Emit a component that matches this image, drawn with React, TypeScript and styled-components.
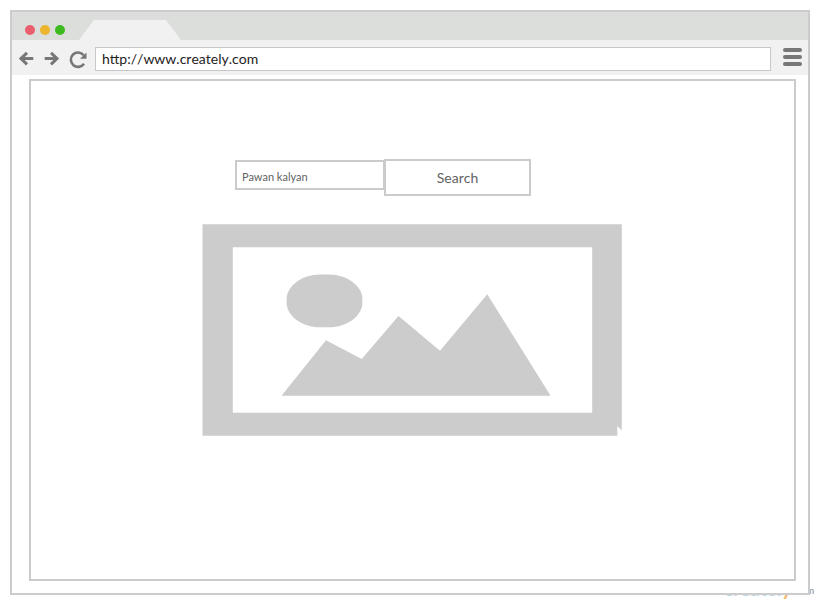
import React from "react";
import styled, { createGlobalStyle } from "styled-components";

const Global = createGlobalStyle`
  *, *::before, *::after { box-sizing: border-box; }
  html, body { margin: 0; background: #fff; overflow: hidden; }
  body { font-family: Lato, "Liberation Sans", sans-serif; }
`;

const Stage = styled.div`
  position: relative;
  width: 820px;
  height: 605px;
  padding: 10px;
  overflow: hidden;
`;

const Browser = styled.main`
  position: relative;
  width: 800px;
  height: 585px;
  border: 2px solid #cbcccb;
  background: #fff;
`;

const TabStrip = styled.header`
  display: flex;
  align-items: flex-end;
  height: 28px;
  padding-left: 13px;
  background: #dcdedb;
`;

const Lights = styled.div`
  display: flex;
  gap: 5px;
  height: 15.5px;
  width: 54px;
`;

const Light = styled.span<{ $color: string }>`
  width: 10px;
  height: 10px;
  border-radius: 50%;
  background: ${(p) => p.$color};
`;

const Tab = styled.div`
  width: 103px;
  height: 20px;
  background: #f1f1f1;
  clip-path: polygon(15px 0, 87px 0, 102px 100%, 0 100%);
`;

const Toolbar = styled.nav`
  display: flex;
  align-items: center;
  height: 35px;
  padding: 0 6px 0 7px;
  background: #f1f1f1;
`;

const NavIcons = styled.svg`
  display: block;
  width: 76px;
  height: 35px;
  flex: none;
`;

const Address = styled.div`
  width: 676px;
  height: 24px;
  margin-top: 2px;
  padding-left: 6px;
  border: 1px solid #c8c8c8;
  background: #fff;
  color: #222;
  font-size: 14px;
  line-height: 22px;
  font-kerning: none;
`;

const Menu = styled.div`
  display: flex;
  flex-direction: column;
  gap: 3px;
  margin: 0 0 2px 12px;
`;

const MenuBar = styled.span`
  width: 19px;
  height: 4px;
  border-radius: 2px;
  background: #777;
`;

const Page = styled.section`
  width: 767px;
  height: 502px;
  margin: 4px 0 0 17px;
  padding-top: 78px;
  border: 2px solid #cbcbcb;
`;

const SearchRow = styled.div`
  display: flex;
  align-items: flex-start;
  margin-left: 204px;
  height: 37px;
`;

const Field = styled.div`
  width: 150px;
  height: 30px;
  margin: 1px -1px 0 0;
  padding-left: 5px;
  border: 2px solid #cbcbcb;
  color: #626262;
  font-size: 11px;
  line-height: 29px;
`;

const Button = styled.div`
  width: 147px;
  height: 37px;
  border: 2px solid #cbcbcb;
  background: #fff;
  color: #626262;
  font-size: 14px;
  line-height: 33px;
  text-align: center;
  font-kerning: none;
`;

const Placeholder = styled.svg`
  display: block;
  width: 420px;
  height: 212px;
  margin: 28px 0 0 171px;
`;

const Watermark = styled.div`
  position: absolute;
  left: 724px;
  top: 577px;
  font-size: 19px;
  line-height: 24px;
  font-weight: 700;
  color: #b9d9ee;
`;

const Accent = styled.span`
  color: #f8b568;
`;

const Suffix = styled.span`
  position: absolute;
  left: 806px;
  top: 584px;
  width: 8px;
  overflow: hidden;
  clip-path: inset(0 0 0 4px);
  color: #888;
  font-size: 10px;
  line-height: 12px;
`;

export default function App() {
  return (
    <Stage>
      <Global />
      <Watermark>createl<Accent>y</Accent></Watermark>
      <Browser>
        <TabStrip>
          <Lights>
            <Light $color="#ea5f6d" />
            <Light $color="#ecb52d" />
            <Light $color="#3cba1f" />
          </Lights>
          <Tab />
        </TabStrip>
        <Toolbar>
          <NavIcons viewBox="19 40 76 35" fill="none" stroke="#777" strokeWidth="3">
            <path d="M33.3 58.5H21M27 52.8L21 58.5L27 64.3" />
            <path d="M44.7 58.5H57M51 52.8L57 58.5L51 64.3" />
            <path d="M83.7 55.2A7.2 7.2 0 1 0 84 63.8" strokeWidth="2.6" />
            <path d="M86.5 52.5V58.8H80Z" fill="#777" stroke="none" />
          </NavIcons>
          <Address>http://www.creately.com</Address>
          <Menu><MenuBar /><MenuBar /><MenuBar /></Menu>
        </Toolbar>
        <Page>
          <SearchRow>
            <Field>Pawan kalyan</Field>
            <Button>Search</Button>
          </SearchRow>
          <Placeholder viewBox="202 224 420 212" fill="#ccc">
            <path fillRule="evenodd" d="M202.5 224.3H621.8V430.5L617.3 426V435.7H202.5ZM232.8 247.3V412.7H592.2V247.3Z" />
            <path d="M286.6 299C286.6 286 302 274.4 320 274.4H329C347 274.4 362.4 286 362.4 299V302.7C362.4 315.7 347 327.3 329 327.3H320C302 327.3 286.6 315.7 286.6 302.7Z" />
            <path d="M281.5 395.8L326 340.2L361.7 359L398.5 316L440 350.7L487.3 294.3L550.6 395.8Z" />
          </Placeholder>
        </Page>
      </Browser>
      <Suffix>m</Suffix>
    </Stage>
  );
}
